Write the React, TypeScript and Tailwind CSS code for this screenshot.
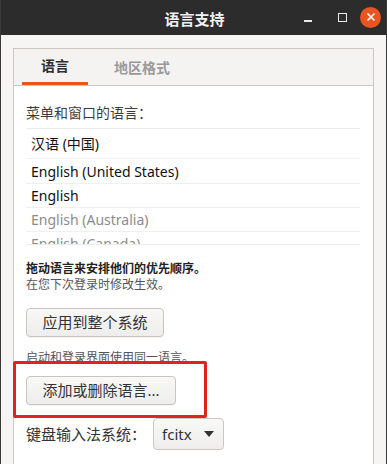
import React from "react";

const langs = [
  { name: "汉语 (中国)", active: true, h: "h-[30px]" },
  { name: "English (United States)", active: true, h: "h-[25px]" },
  { name: "English", active: true, h: "h-[24px]" },
  { name: "English (Australia)", active: false, h: "h-[24px]" },
  { name: "English (Canada)", active: false, h: "h-[24px]" },
];

const btn =
  "h-[29px] rounded-[4px] border border-[#c9c4bf] bg-gradient-to-b from-[#f8f8f7] to-[#eeedec] text-[15px] text-[#333] shadow-[0_1px_0_rgba(0,0,0,0.05)]";

const App: React.FC = () => {
  return (
    <div
      className="relative w-[387px] h-[464px] overflow-hidden bg-[#f6f5f4] border-x border-[#3a3a3a]"
      style={{ fontFamily: '"Noto Sans", "Noto Sans CJK SC", sans-serif' }}
    >
      {/* title bar */}
      <div className="h-[35px] bg-[#2c2c2c] grid grid-cols-[1fr_auto_1fr] items-center">
        <div />
        <div className="text-[15px] font-bold text-[#f2f2f2] pl-[2px] pt-[3px]">语言支持</div>
        <div className="flex items-center justify-end pr-[4px]">
          <div className="w-[35px] flex justify-center">
            <div className="w-[8px] h-[2px] bg-[#eaeaea] mt-[7px]" />
          </div>
          <div className="w-[35px] flex justify-center">
            <div className="w-[9px] h-[9px] border-[1.5px] border-[#eaeaea]" />
          </div>
          <div className="w-[21px] h-[21px] rounded-full bg-[#e95420] flex items-center justify-center mr-[1px] mb-[1px]">
            <svg width="10" height="10" viewBox="0 0 10 10">
              <path d="M1.5 1.5 L8.5 8.5 M8.5 1.5 L1.5 8.5" stroke="#fff" strokeWidth="1.6" />
            </svg>
          </div>
        </div>
      </div>

      {/* notebook */}
      <div className="px-[12px] pt-[13px]">
        <div className="border border-[#cdc7c2] h-[420px] flex flex-col">
          <div className="h-[37px] bg-[#f4f3f2] border-b border-[#cdc7c2] flex items-end pl-[8px]">
            <div className="w-[66px] h-full flex flex-col items-center justify-between">
              <span className="text-[14px] font-bold text-[#2e2e2e] mt-[6px]">语言</span>
              <div className="w-full h-[3px] bg-[#e95420]" />
            </div>
            <div className="ml-[26px] h-full pt-[6px]">
              <span className="text-[14px] font-bold text-[#9a9a9a]">地区格式</span>
            </div>
          </div>

          <div className="flex-1 bg-white pl-[12px] pr-[13px]">
            <div className="h-[42px] flex items-end pb-[5px] text-[14px] text-[#3d3d3d]">
              菜单和窗口的语言：
            </div>
            <div className="h-[117px] overflow-hidden border-t border-b border-[#ececec]">
              {langs.map((l) => (
                <div
                  key={l.name}
                  className={`${l.h} flex items-center pl-[5px] border-b border-[#f0f0f0] text-[14px] ${
                    l.active ? "text-[#111]" : "text-[#8c8c8c]"
                  }`}
                >
                  {l.name}
                </div>
              ))}
            </div>

            <div className="mt-[16px] text-[12px] font-bold text-[#222] leading-[16px]">
              拖动语言来安排他们的优先顺序。
            </div>
            <div className="text-[12px] text-[#555] leading-[16px]">在您下次登录时修改生效。</div>

            <button className={`${btn} mt-[15px] w-[138px] block`}>应用到整个系统</button>

            <div className="mt-[13px] text-[12px] text-[#555] leading-[16px]">启动和登录界面使用同一语言。</div>

            <button className={`${btn} mt-[10px] w-[150px] block`}>添加或删除语言...</button>

            <div className="mt-[13px] flex items-center">
              <span className="text-[15px] text-[#333]">键盘输入法系统：</span>
              <div className="ml-[7px] h-[32px] w-[71px] rounded-[4px] border border-[#cdc7c2] bg-gradient-to-b from-[#f8f8f7] to-[#efeeed] flex items-center pl-[8px] pr-[9px] justify-between">
                <span className="text-[15px] text-[#333]">fcitx</span>
                <svg width="10" height="6" viewBox="0 0 10 6">
                  <path d="M0 0 L10 0 L5 6 Z" fill="#333" />
                </svg>
              </div>
            </div>
          </div>
        </div>
      </div>

      {/* annotation */}
      <div className="absolute left-[12px] top-[361px] w-[194px] h-[57px] border-[3px] border-[#e0231f] rounded-[2px]" />
    </div>
  );
};

export default App;
